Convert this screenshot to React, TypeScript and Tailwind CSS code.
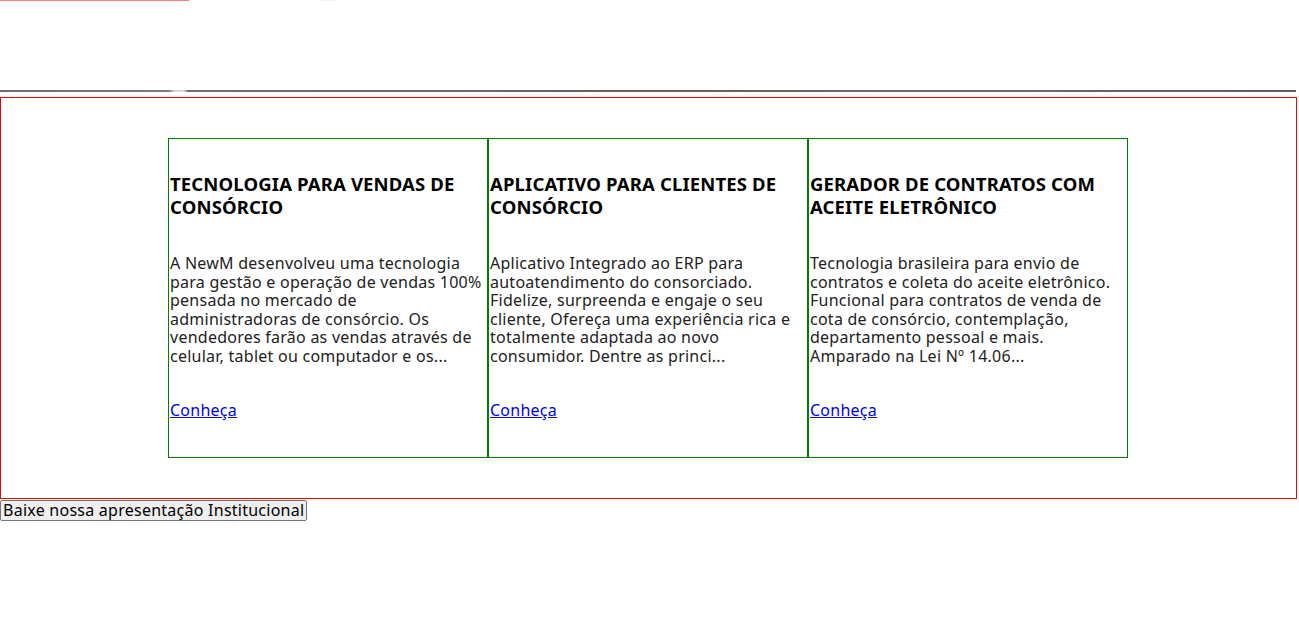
import React from 'react'

type Card = {
    title: string[]
    lines: string[]
}

const cards: Card[] = [
    {
        title: ['TECNOLOGIA PARA VENDAS DE', 'CONSÓRCIO'],
        lines: [
            'A NewM desenvolveu uma tecnologia',
            'para gestão e operação de vendas 100%',
            'pensada no mercado de',
            'administradoras de consórcio. Os',
            'vendedores farão as vendas através de',
            'celular, tablet ou computador e os...',
        ],
    },
    {
        title: ['APLICATIVO PARA CLIENTES DE', 'CONSÓRCIO'],
        lines: [
            'Aplicativo Integrado ao ERP para',
            'autoatendimento do consorciado.',
            'Fidelize, surpreenda e engaje o seu',
            'cliente, Ofereça uma experiência rica e',
            'totalmente adaptada ao novo',
            'consumidor. Dentre as princi...',
        ],
    },
    {
        title: ['GERADOR DE CONTRATOS COM', 'ACEITE ELETRÔNICO'],
        lines: [
            'Tecnologia brasileira para envio de',
            'contratos e coleta do aceite eletrônico.',
            'Funcional para contratos de venda de',
            'cota de consórcio, contemplação,',
            'departamento pessoal e mais.',
            'Amparado na Lei Nº 14.06...',
        ],
    },
]

function ProductCard({ card }: { card: Card }) {
    return (
        <div className="w-[320px] h-[320px] border border-[#008000] pl-px">
            <h3 className="mt-[34px] text-[18.5px] leading-[22.5px] font-bold tracking-[0.15px] text-black whitespace-nowrap">
                {card.title.map((t, i) => (
                    <div key={i}>{t}</div>
                ))}
            </h3>
            <p className="mt-[36px] text-[16px] leading-[18.5px] tracking-[0.25px] text-[#222] whitespace-nowrap">
                {card.lines.map((l, i) => (
                    <span key={i} className="block">{l}</span>
                ))}
            </p>
            <a href="#" className="inline-block mt-[36px] text-[16px] leading-[18.5px] tracking-[0.25px] text-[#0000ee] underline">
                Conheça
            </a>
        </div>
    )
}

export default function App() {
    return (
        <div className="bg-white min-h-[642px] text-black" style={{ fontFamily: '"Noto Sans", "Open Sans", sans-serif' }}>
            {/* top progress strip */}
            <div className="flex h-px">
                <div className="w-[189px] bg-[#f28080]" />
                <div className="w-[131px]" />
                <div className="w-[16px] bg-[#f2f2f2]" />
            </div>

            {/* header divider */}
            <div className="mt-[89px] w-[1296px] h-[2px] bg-[linear-gradient(90deg,#6e6e6e_0%,#7a7a7a_13%,#d8d8d8_13.5%,#d8d8d8_14.2%,#707070_14.5%,#6a625c_50%,#6e6a66_75%,#5e5e5e_100%)]" />

            {/* products */}
            <section className="mt-[5px] w-[1297px] border border-[#ff0000] py-[40px] pl-[167px]">
                <div className="flex">
                    {cards.map((c, i) => (
                        <ProductCard key={i} card={c} />
                    ))}
                </div>
            </section>

            <button className="mt-[1px] block bg-[#efefef] border border-[#767676] rounded-[2px] px-[2px] text-[16px] leading-[19px] tracking-[0.25px] text-black whitespace-nowrap">
                Baixe nossa apresentação Institucional
            </button>
        </div>
    )
}
